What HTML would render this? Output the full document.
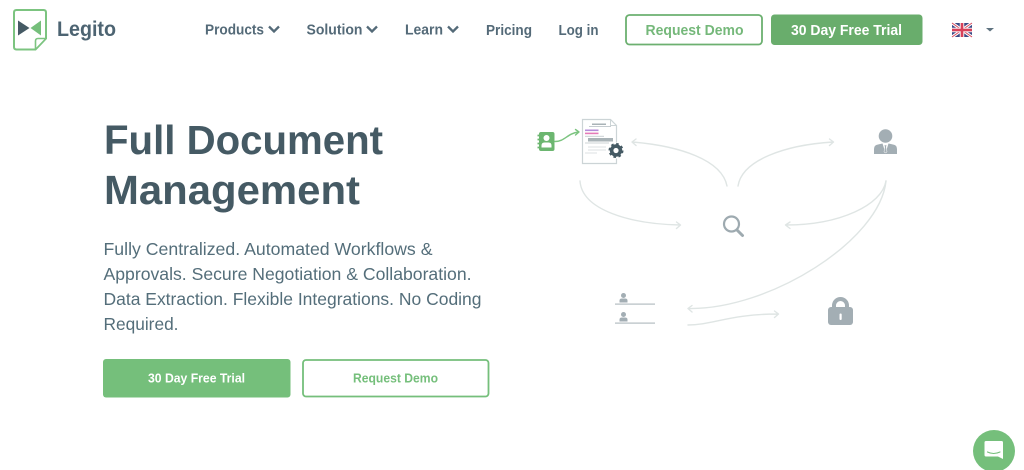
<!DOCTYPE html>
<html lang="en">
<head>
<meta charset="utf-8">
<title>Legito</title>
<style>
html,body{margin:0;padding:0;width:1024px;height:470px;overflow:hidden;background:#fff}
svg{display:block;position:absolute;left:0;top:0;filter:blur(.3px)}
text{font-family:"Liberation Sans",sans-serif}
.nav{font-size:14.5px;font-weight:700;fill:#546a78}
.h{font-size:40.5px;font-weight:700;fill:#455a64}
.p{font-size:17.5px;fill:#546e7a}
.arr{fill:none;stroke:#dfe5e4;stroke-width:1.4;stroke-linecap:round;stroke-linejoin:round}
.chev{fill:none;stroke:#546a78;stroke-width:2.3}
</style>
</head>
<body>
<svg width="1024" height="470" viewBox="0 0 1024 470" xmlns="http://www.w3.org/2000/svg">
  <!-- logo -->
  <path d="M16.500 10H43.500Q46 10 46 12.500V38.500L35.500 49.500H16.500Q14 49.500 14 47V12.500Q14 10 16.500 10Z" fill="#fff" stroke="#7cc480" stroke-width="2"/>
  <path d="M46 38.500H38Q35.500 38.500 35.500 41V49.500Z" fill="#fff" stroke="#7cc480" stroke-width="1.600" stroke-linejoin="round"/>
  <path d="M18 20.500L29.500 28L18 35.500Z" fill="#455a64"/>
  <path d="M41 20.500L30.500 28L41 35.500Z" fill="#75bf7b"/>
  <text x="57" y="36" font-size="21" font-weight="700" fill="#4d6472" textLength="59" lengthAdjust="spacingAndGlyphs">Legito</text>

  <!-- nav -->
  <text class="nav" x="205" y="34.500" textLength="59" lengthAdjust="spacingAndGlyphs">Products</text>
  <path class="chev" d="M269 26.500L274 31.500L279 26.500"/>
  <text class="nav" x="306.500" y="34.500" textLength="56" lengthAdjust="spacingAndGlyphs">Solution</text>
  <path class="chev" d="M367 26.500L372 31.500L377 26.500"/>
  <text class="nav" x="405" y="34.500" textLength="38" lengthAdjust="spacingAndGlyphs">Learn</text>
  <path class="chev" d="M448 26.500L453 31.500L458 26.500"/>
  <text class="nav" x="486" y="35" textLength="46" lengthAdjust="spacingAndGlyphs">Pricing</text>
  <text class="nav" x="558.500" y="35" textLength="40" lengthAdjust="spacingAndGlyphs">Log in</text>

  <!-- header buttons -->
  <rect x="626" y="15" width="136" height="29.500" rx="3.500" fill="#fff" stroke="#6cb070" stroke-width="1.800"/>
  <text x="645.500" y="35" font-size="14.500" font-weight="700" fill="#75b87a" textLength="98" lengthAdjust="spacingAndGlyphs">Request Demo</text>
  <rect x="771" y="14.500" width="151.500" height="30.500" rx="3.500" fill="#69ad6c"/>
  <text x="791" y="35" font-size="14.500" font-weight="700" fill="#fff" textLength="111" lengthAdjust="spacingAndGlyphs">30 Day Free Trial</text>

  <!-- flag -->
  <g>
    <rect x="952" y="23" width="20" height="14" fill="#3b4a86"/>
    <path d="M952 23L972 37M972 23L952 37" stroke="#fff" stroke-width="3"/>
    <path d="M952 23L972 37M972 23L952 37" stroke="#d8475a" stroke-width="1"/>
    <path d="M962 23V37M952 30H972" stroke="#f4e8ea" stroke-width="4.500"/>
    <path d="M962 23V37M952 30H972" stroke="#d8405a" stroke-width="2.500"/>
  </g>
  <path d="M986 28H994L990 31.500Z" fill="#5f7380"/>

  <!-- hero text -->
  <text class="h" x="104" y="154" textLength="279" lengthAdjust="spacingAndGlyphs">Full Document</text>
  <text class="h" x="104" y="204" textLength="256" lengthAdjust="spacingAndGlyphs">Management</text>
  <text class="p" x="103.500" y="255" textLength="329" lengthAdjust="spacingAndGlyphs">Fully Centralized. Automated Workflows &amp;</text>
  <text class="p" x="103.500" y="280" textLength="368" lengthAdjust="spacingAndGlyphs">Approvals. Secure Negotiation &amp; Collaboration.</text>
  <text class="p" x="103.500" y="305" textLength="378" lengthAdjust="spacingAndGlyphs">Data Extraction. Flexible Integrations. No Coding</text>
  <text class="p" x="103.500" y="330" textLength="75" lengthAdjust="spacingAndGlyphs">Required.</text>

  <!-- hero buttons -->
  <rect x="103" y="359" width="187.500" height="38.500" rx="3" fill="#75bf7b"/>
  <text x="148" y="382.500" font-size="12.500" font-weight="700" fill="#fff" textLength="97" lengthAdjust="spacingAndGlyphs">30 Day Free Trial</text>
  <rect x="303" y="360" width="185.500" height="36.500" rx="3" fill="#fff" stroke="#75bf7b" stroke-width="1.800"/>
  <text x="353" y="382.500" font-size="12.500" font-weight="700" fill="#75bf7b" textLength="85" lengthAdjust="spacingAndGlyphs">Request Demo</text>

  <!-- contact book -->
  <rect x="539" y="132" width="15.500" height="19" rx="2" fill="#6cb670"/>
  <path d="M537.500 135.500h3M537.500 139.500h3M537.500 143.500h3M537.500 147.500h3" stroke="#6cb670" stroke-width="1.800"/>
  <circle cx="546.500" cy="138" r="3" fill="#fff"/>
  <path d="M541.500 147.500V145.500Q541.500 142.500 544.500 142.500H548.500Q551.500 142.500 551.500 145.500V147.500Z" fill="#fff"/>
  <path d="M555 141.500C565 141.500 567 133.500 578.500 132M575.500 129.500L579 132L575.500 135" fill="none" stroke="#7cc480" stroke-width="1.400" stroke-linecap="round" stroke-linejoin="round"/>

  <!-- document -->
  <path d="M582.500 119.500H610.500L616.500 125.500V163.500H582.500Z" fill="#fff" stroke="#ccd4d6" stroke-width="1.200"/>
  <path d="M610.500 119.500V125.500H616.500" fill="none" stroke="#ccd4d6" stroke-width="1"/>
  <rect x="592" y="123.500" width="14" height="1.500" fill="#a9b3b7"/>
  <rect x="589" y="126" width="22" height="1" fill="#c5ccd0"/>
  <rect x="585" y="129.500" width="13.500" height="1.600" fill="#b58bd8"/>
  <rect x="585" y="132.600" width="13.500" height="1.600" fill="#e57ab8"/>
  <rect x="585" y="135.800" width="19" height="1" fill="#c9d0d3"/>
  <rect x="588" y="138" width="25" height="3.500" fill="#a9b3b7"/>
  <rect x="585" y="142.500" width="24" height="1" fill="#ccd3d6"/>
  <rect x="588" y="146.500" width="18" height="1" fill="#dde1e3"/>
  <rect x="588" y="149.500" width="18" height="1" fill="#dde1e3"/>
  <rect x="585" y="152.500" width="12" height="1" fill="#dde1e3"/>
  <circle cx="616" cy="150.500" r="8" fill="#fff"/>
  <circle cx="616" cy="150.500" r="4.400" fill="none" stroke="#455a64" stroke-width="3.600"/>
  <circle cx="616" cy="150.500" r="6.600" fill="none" stroke="#455a64" stroke-width="1.800" stroke-dasharray="2.600 2.580"/>

  <!-- arrows -->
  <path class="arr" d="M727 186C722 160 680 146 632.500 142M636 139L632 142L636 145.500"/>
  <path class="arr" d="M580 181C582 210 630 224 680 225M676.500 222L680.500 225L676.500 228.500"/>
  <path class="arr" d="M738 186C742 160 785 145 833 142M829.500 139L833.500 142L829.500 145.500"/>
  <path class="arr" d="M886 181C882 205 840 225 786 225M790 222L785.500 225L790 228.500"/>
  <path class="arr" d="M886 181C880 240 770 310 688 308.500M692 305.500L688 308.500L692 312"/>
  <path class="arr" d="M688 325C712 325 730 314 778 314M774.500 311L778.500 314L774.500 317.500"/>

  <!-- magnifier -->
  <circle cx="731.500" cy="224" r="7.500" fill="none" stroke="#9eaab0" stroke-width="2.200"/>
  <path d="M737 230L742.500 235.500" stroke="#9eaab0" stroke-width="3" stroke-linecap="round"/>

  <!-- person -->
  <circle cx="885.500" cy="136" r="6.800" fill="#a3aeb4"/>
  <path d="M874 154V149Q874 145 878 144.500L882.500 143.500L885.500 153L888.500 143.500L893 144.500Q897 145 897 149V154Z" fill="#a3aeb4"/>
  <path d="M884.200 145H886.800L886.300 147L887 152L885.500 153L884 152L884.700 147Z" fill="#a3aeb4" stroke="#fff" stroke-width=".5"/>

  <!-- small people -->
  <circle cx="623.500" cy="295.500" r="2.500" fill="#a3aeb4"/>
  <path d="M619.500 302.500V300.500Q619.500 298.500 622 298.500H625Q627.500 298.500 627.500 300.500V302.500Z" fill="#a3aeb4"/>
  <rect x="615" y="303.500" width="40" height="1.200" fill="#b4bdc2"/>
  <circle cx="623.500" cy="314.500" r="2.500" fill="#a3aeb4"/>
  <path d="M619.500 321.500V319.500Q619.500 317.500 622 317.500H625Q627.500 317.500 627.500 319.500V321.500Z" fill="#a3aeb4"/>
  <rect x="615" y="322.500" width="40" height="1.200" fill="#b4bdc2"/>

  <!-- lock -->
  <path d="M834 309V305.500A6.500 6.500 0 0 1 847 305.500V309" fill="none" stroke="#a3aeb4" stroke-width="4"/>
  <rect x="828" y="307" width="25" height="18" rx="3" fill="#a3aeb4"/>
  <rect x="839.500" y="313.500" width="2.200" height="6.500" rx="1" fill="#fff"/>

  <!-- chat -->
  <circle cx="994" cy="451" r="21" fill="#75bf7b"/>
  <path d="M986 441H1001.500Q1003 441 1003 442.500V459L998 456.500H986Q984.500 456.500 984.500 455V442.500Q984.500 441 986 441Z" fill="#fff"/>
  <path d="M987.500 452Q993.500 455 1000 452" fill="none" stroke="#75bf7b" stroke-width="1.100" stroke-linecap="round"/>
</svg>
</body>
</html>
